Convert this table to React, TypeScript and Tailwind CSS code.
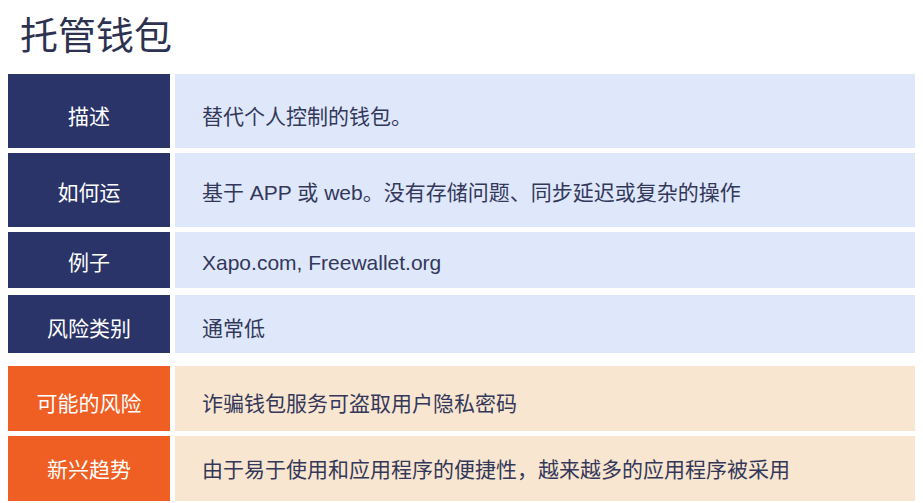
import React from 'react'

type Row = {
  label: string
  text: string
  tone: 'navy' | 'orange'
  h: string
  mt: string
  pt: string
}

const rows: Row[] = [
  { label: '描述', text: '替代个人控制的钱包。', tone: 'navy', h: 'h-[74px]', mt: 'mt-0', pt: 'pt-[12px]' },
  { label: '如何运', text: '基于 APP 或 web。没有存储问题、同步延迟或复杂的操作', tone: 'navy', h: 'h-[74px]', mt: 'mt-[5px]', pt: 'pt-[6px]' },
  { label: '例子', text: 'Xapo.com, Freewallet.org', tone: 'navy', h: 'h-[56px]', mt: 'mt-[5px]', pt: 'pt-[6px]' },
  { label: '风险类别', text: '通常低', tone: 'navy', h: 'h-[58px]', mt: 'mt-[7px]', pt: 'pt-[10px]' },
  { label: '可能的风险', text: '诈骗钱包服务可盗取用户隐私密码', tone: 'orange', h: 'h-[65px]', mt: 'mt-[13px]', pt: 'pt-[10px]' },
  { label: '新兴趋势', text: '由于易于使用和应用程序的便捷性，越来越多的应用程序被采用', tone: 'orange', h: 'h-[65px]', mt: 'mt-[5px]', pt: 'pt-[2px]' },
]

export default function App() {
  return (
    <div
      className="w-[923px] h-[503px] bg-white overflow-hidden"
      style={{ fontFamily: '"Liberation Sans", "Noto Sans CJK SC", sans-serif' }}
    >
      <h1 className="pl-[20px] pt-[13px] h-[74px] text-[38px] leading-[46px] text-[#2d3250] font-normal">
        托管钱包
      </h1>

      <div className="flex flex-col pl-[8px] pr-[8px]">
        {rows.map(r => (
          <div key={r.label} className={`flex gap-[5px] ${r.h} ${r.mt}`}>
            <div
              className={`w-[162px] shrink-0 flex items-center justify-center text-[21px] text-white ${r.pt} ${
                r.tone === 'navy' ? 'bg-[#2b3468]' : 'bg-[#ef5e22]'
              }`}
            >
              {r.label}
            </div>
            <div
              className={`flex-1 flex items-center pl-[27px] text-[21px] text-[#33385a] ${r.pt} ${
                r.tone === 'navy' ? 'bg-[#dfe8fb]' : 'bg-[#f9e6d0]'
              }`}
            >
              {r.text}
            </div>
          </div>
        ))}
      </div>
    </div>
  )
}
